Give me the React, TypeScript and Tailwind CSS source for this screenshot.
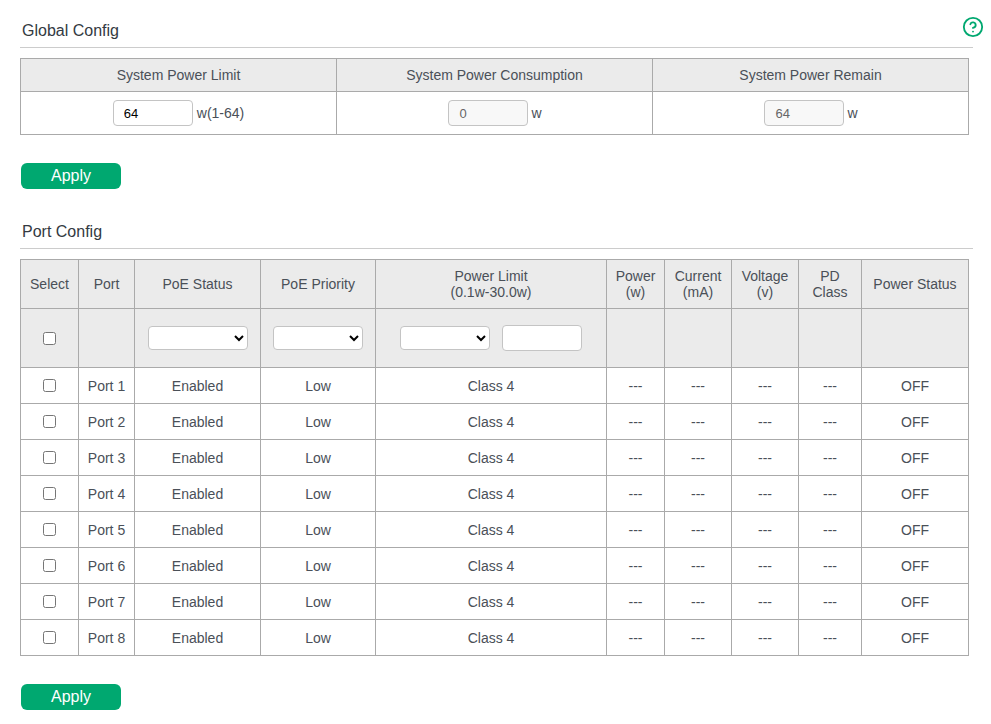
import { CircleHelp } from "lucide-react";

const ports = [1, 2, 3, 4, 5, 6, 7, 8];

const cell = "border border-[#aaaaaa] text-center align-middle p-0 font-normal";
const head = cell + " bg-[#ebebeb]";
const box = "border border-[#c4c4c4] rounded-[4px] bg-white text-black";

function Heading({ title }: { title: string }) {
  return (
    <div className="w-[953px] h-[26px] pl-[2px] border-b border-[#cccccc] text-[16px] leading-[18px] text-[#333a42]">
      {title}
    </div>
  );
}

function ApplyButton() {
  return (
    <button className="block w-[100px] h-[26px] ml-px rounded-[6px] bg-[#00a870] text-white text-[16px] leading-[24px]">
      Apply
    </button>
  );
}

function GlobalField({ value, unit, readOnly }: { value: string; unit: string; readOnly?: boolean }) {
  return (
    <div className={readOnly ? "flex items-center justify-center gap-[3px] pl-[1px]" : "flex items-center justify-center gap-[4px]"}>
      <input
        defaultValue={value}
        readOnly={readOnly}
        className={
          readOnly
            ? "w-[80px] h-[26px] pl-[10px] border border-[#c4c4c4] rounded-[4px] bg-[#f8f8f8] text-[#666666] text-[13px]"
            : "w-[80px] h-[26px] pl-[10px] border border-[#c4c4c4] rounded-[4px] bg-white text-black text-[13px]"
        }
      />
      <span>{unit}</span>
    </div>
  );
}

export default function App() {
  return (
    <div className="relative h-[724px] bg-white pt-[22px] pl-[20px] text-[14px] leading-[16px] text-[#4a5058] font-['Liberation_Sans',Arial,sans-serif]">
      <CircleHelp className="absolute left-[962px] top-[16px] w-[22px] h-[22px] text-[#00a870]" strokeWidth={2} />

      <Heading title="Global Config" />
      <table className="mt-[10px] w-[949px] table-fixed border-collapse">
        <tbody>
          <tr className="h-[33px]">
            <th className={head}>System Power Limit</th>
            <th className={head}>System Power Consumption</th>
            <th className={head}>System Power Remain</th>
          </tr>
          <tr className="h-[43px]">
            <td className={cell}>
              <GlobalField value="64" unit="w(1-64)" />
            </td>
            <td className={cell}>
              <GlobalField value="0" unit="w" readOnly />
            </td>
            <td className={cell}>
              <GlobalField value="64" unit="w" readOnly />
            </td>
          </tr>
        </tbody>
      </table>

      <div className="mt-[28px]">
        <ApplyButton />
      </div>

      <div className="mt-[34px]">
        <Heading title="Port Config" />
      </div>
      <table className="mt-[10px] w-[949px] table-fixed border-collapse">
        <colgroup>
          <col className="w-[58px]" />
          <col className="w-[56px]" />
          <col className="w-[126px]" />
          <col className="w-[115px]" />
          <col className="w-[231px]" />
          <col className="w-[58px]" />
          <col className="w-[67px]" />
          <col className="w-[67px]" />
          <col className="w-[63px]" />
          <col />
        </colgroup>
        <tbody>
          <tr className="h-[49px]">
            <th className={head}>Select</th>
            <th className={head}>Port</th>
            <th className={head}>PoE Status</th>
            <th className={head}>PoE Priority</th>
            <th className={head}>
              Power Limit
              <br />
              (0.1w-30.0w)
            </th>
            <th className={head}>
              Power
              <br />
              (w)
            </th>
            <th className={head}>
              Current
              <br />
              (mA)
            </th>
            <th className={head}>
              Voltage
              <br />
              (v)
            </th>
            <th className={head}>
              PD
              <br />
              Class
            </th>
            <th className={head}>Power Status</th>
          </tr>
          <tr className="h-[59px]">
            <td className={head}>
              <input type="checkbox" className="block mx-auto" />
            </td>
            <td className={head}></td>
            <td className={head}>
              <select className={"block mx-auto w-[100px] h-[24px] " + box}></select>
            </td>
            <td className={head}>
              <select className={"block mx-auto w-[90px] h-[24px] " + box}></select>
            </td>
            <td className={head}>
              <div className="flex items-center justify-center gap-[12px]">
                <select className={"w-[90px] h-[24px] " + box}></select>
                <input className={"w-[80px] h-[26px] " + box} />
              </div>
            </td>
            <td className={head}></td>
            <td className={head}></td>
            <td className={head}></td>
            <td className={head}></td>
            <td className={head}></td>
          </tr>
          {ports.map((n) => (
            <tr key={n} className="h-[36px]">
              <td className={cell}>
                <input type="checkbox" className="block mx-auto" />
              </td>
              <td className={cell}>Port {n}</td>
              <td className={cell}>Enabled</td>
              <td className={cell}>Low</td>
              <td className={cell}>Class 4</td>
              <td className={cell}>---</td>
              <td className={cell}>---</td>
              <td className={cell}>---</td>
              <td className={cell}>---</td>
              <td className={cell}>OFF</td>
            </tr>
          ))}
        </tbody>
      </table>

      <div className="mt-[28px]">
        <ApplyButton />
      </div>
    </div>
  );
}
